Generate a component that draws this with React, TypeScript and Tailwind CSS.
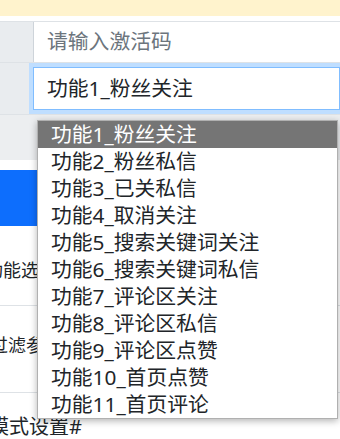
import React from "react";

const options = [
  "功能1_粉丝关注",
  "功能2_粉丝私信",
  "功能3_已关私信",
  "功能4_取消关注",
  "功能5_搜索关键词关注",
  "功能6_搜索关键词私信",
  "功能7_评论区关注",
  "功能8_评论区私信",
  "功能9_评论区点赞",
  "功能10_首页点赞",
  "功能11_首页评论",
];

export default function App() {
  return (
    <div
      className="relative w-[340px] h-[439px] overflow-hidden bg-white text-[#212529]"
      style={{ fontFamily: '"Noto Sans", "Noto Sans CJK SC", sans-serif' }}
    >
      <div className="h-[16px] bg-[#fff3cd]" />
      <div className="h-[5px]" />
      {/* row 1 */}
      <div className="flex h-[41px] border-t border-[#dee2e6]">
        <div className="w-[34px] bg-[#e9ecef] border-r border-[#ced4da]" />
        <div className="flex-1 flex items-center pl-[13px] text-[20.8px] text-[#6c757d]">
          请输入激活码
        </div>
      </div>
      {/* row 2 */}
      <div className="flex h-[52px] border-t border-[#dee2e6]">
        <div className="w-[29px] bg-[#e9ecef]" />
        <div className="flex-1 flex pt-[4px] pb-[4px] pl-[4px]">
          <div className="flex-1 flex items-center pl-[13px] text-[20.8px] bg-white border border-[#80bdff] shadow-[0_0_0_4px_rgba(0,123,255,0.25)]">
            功能1_粉丝关注
          </div>
        </div>
      </div>
      {/* row 3 */}
      <div className="h-[46px] bg-[#eceef0] border-t border-[#dee2e6]" />
      <div className="h-[10px]" />
      <div className="h-[56px] w-[200px] bg-[#0d6efd]" />
      <div className="h-[80px] pt-[32px] border-b border-[#dee2e6]">
        <div className="ml-[-15px] text-[18px] leading-[24px] whitespace-nowrap">功能选择</div>
      </div>
      <div className="h-[87px] pt-[27px] border-b border-[#dee2e6]">
        <div className="ml-[-10px] text-[18px] leading-[24px] whitespace-nowrap">过滤参数</div>
      </div>
      <div className="h-[46px] pt-[22px]">
        <div className="ml-[-11px] text-[20px] leading-[24px] whitespace-nowrap">模式设置#</div>
      </div>

      {/* dropdown overlay */}
      <div className="absolute left-[37px] top-[120px] w-[301px] bg-white border border-[#b0b0b0] shadow-[0_2px_7px_rgba(0,0,0,0.3)]">
        {options.map((o, i) => (
          <div
            key={o}
            className={
              "h-[27px] pl-[13px] flex items-center text-[20.8px] whitespace-nowrap " +
              (i === 0 ? "bg-[#757575] text-white" : "text-[#212529]")
            }
          >
            {o}
          </div>
        ))}
      </div>
    </div>
  );
}
